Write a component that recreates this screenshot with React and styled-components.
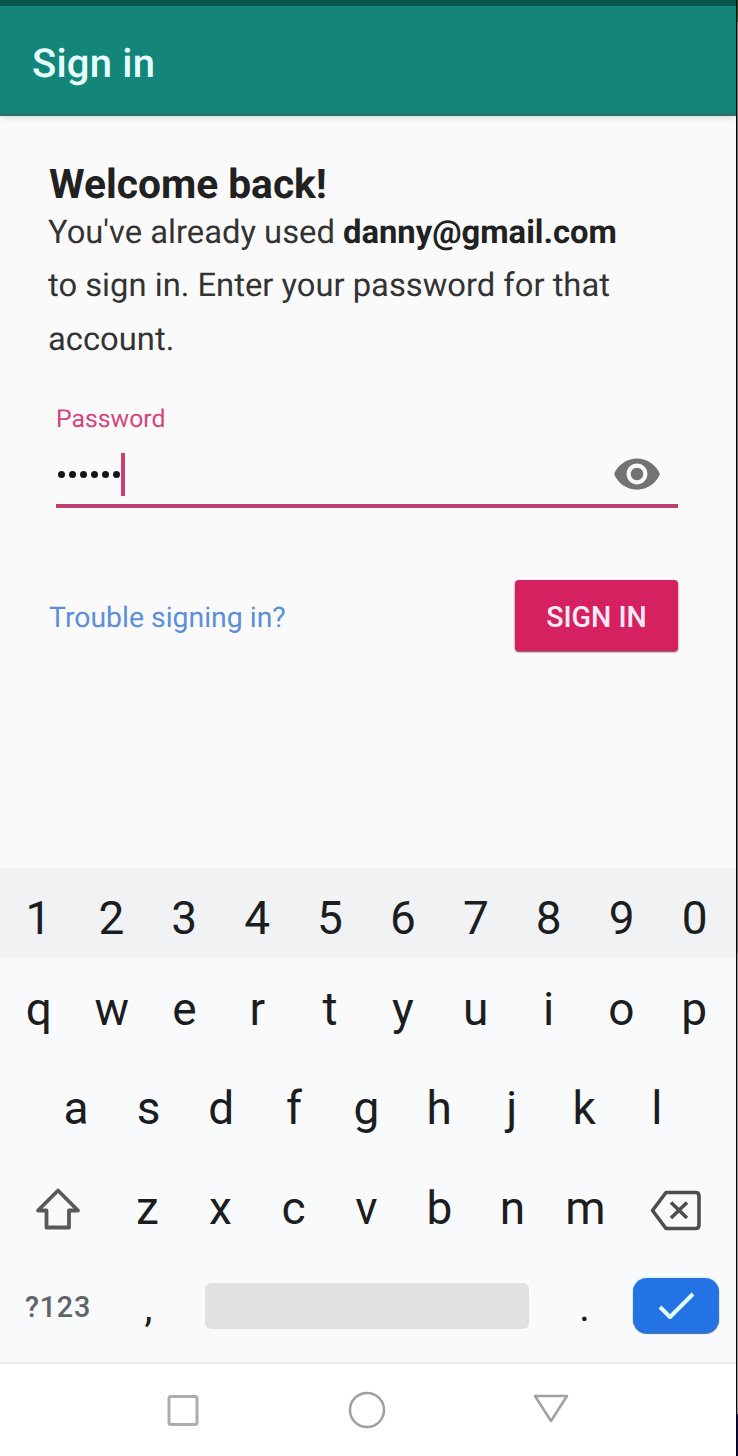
import React from "react";
import styled, { createGlobalStyle } from "styled-components";

const GlobalStyle = createGlobalStyle`
  * { box-sizing: border-box; }
  body { margin: 0; background: #fafafa; font-family: Roboto, "Liberation Sans", sans-serif; text-rendering: geometricPrecision; }
  button { font: inherit; border: 0; padding: 0; background: none; color: inherit; }
`;

const Frame = styled.div`
  width: 738px;
  height: 1456px;
  display: flex;
  overflow: hidden;
`;

const Screen = styled.div`
  width: 736px;
  display: flex;
  flex-direction: column;
  background: #fafafa;
`;

const Edge = styled.div`
  width: 2px;
  border-left: 1px solid #000;
  background: linear-gradient(#17591c 0 22px, #777 22px 954px, #999 954px 1414px, #12126b 1414px);
`;

const StatusBar = styled.div`
  height: 6px;
  background: #07574e;
`;

const AppBar = styled.header`
  height: 110px;
  padding: 0 32px;
  background: linear-gradient(#148579 0 105px, #2c6d66 110px);
  box-shadow: 0 1px 6px rgba(60, 90, 90, 0.22);
  z-index: 1;
`;

const AppTitle = styled.h1`
  margin: 0;
  font-size: 40px;
  line-height: 115px;
  font-weight: 500;
  letter-spacing: 0.2px;
  color: #e6fffc;
`;

const Content = styled.main`
  height: 752px;
  padding: 45px 58px 0 49px;
  color: #212121;
`;

const Heading = styled.h2`
  margin: 0;
  font-size: 40.7px;
  line-height: 46px;
  font-weight: 700;
`;

const Message = styled.p`
  margin: -1px -20px 0 -1px;
  font-size: 32.75px;
  line-height: 53.4px;
  color: #333;
  white-space: nowrap;
  b { color: #212121; }
`;

const Field = styled.div`
  margin: 38px 0 0 7px;
  height: 104px;
  border-bottom: 4px solid #bf3f72;
  color: #d4467d;
`;

const FieldLabel = styled.label`
  display: block;
  height: 30px;
  font-size: 24.8px;
  line-height: 32px;
`;

const FieldRow = styled.div`
  display: flex;
  align-items: center;
  height: 62px;
  padding: 0 16px 0 2px;
  margin-top: 9px;
`;

const Dots = styled.div`
  display: flex;
  gap: 4px;
`;

const Dot = styled.span`
  width: 7px;
  height: 7px;
  border-radius: 50%;
  background: #151515;
`;

const Caret = styled.span`
  width: 4px;
  height: 43px;
  margin-left: 1px;
  background: #d03d72;
`;

const EyeButton = styled.button`
  display: flex;
  margin-left: auto;
`;

const Actions = styled.div`
  margin-top: 72px;
  display: flex;
  align-items: center;
  justify-content: space-between;
`;

const TroubleLink = styled.a`
  font-size: 28.4px;
  line-height: 36px;
  color: #5b8fdc;
  padding-top: 4px;
`;

const SignInButton = styled.button`
  width: 163px;
  height: 71px;
  border-radius: 4px;
  background: #d52160;
  color: #ffeaf5;
  font-size: 28.6px;
  line-height: 74px;
  font-weight: 500;
  box-shadow: 0 1px 2px rgba(70, 0, 35, 0.8);
`;

const Keyboard = styled.section`
  height: 494px;
  background: #f9fafc;
  color: #1c1d1f;
`;

const KeyRow = styled.div`
  display: flex;
  justify-content: ${(p) => p.$justify || "center"};
  height: ${(p) => p.$height}px;
  padding: ${(p) => p.$padding || "0 5px 0 1px"};
  background: ${(p) => p.$background || "transparent"};
`;

const Key = styled.button`
  width: ${(p) => p.$width || 73}px;
  display: flex;
  align-items: center;
  justify-content: center;
  font-size: 46px;
  line-height: 54px;
`;

const SymbolsKey = styled(Key)`
  font-size: 28.7px;
  font-weight: 500;
  letter-spacing: 0.8px;
  padding: 2px 0 0 3px;
  color: #626366;
`;

const PunctuationKey = styled(Key)`
  font-size: 40px;
  padding-top: 4px;
`;

const SpaceBar = styled.button`
  width: 324px;
  height: 46px;
  margin: auto 19px auto 20px;
  border-radius: 6px;
  background: #e1e1e1;
`;

const EnterKey = styled.button`
  width: 86px;
  height: 55px;
  margin: 21px 0 0 12px;
  display: flex;
  align-items: center;
  justify-content: center;
  border-radius: 14px;
  background: #2373e4;
  box-shadow: 0 1px 1px #46658e, 0 -1px 2px #c9f2ff;
`;

const NavBar = styled.nav`
  height: 94px;
  border-top: 2px solid #ebebeb;
  background: #fff;
  display: flex;
  justify-content: center;
  padding-top: 26px;
`;

const NavButton = styled.button`
  width: 184px;
  height: 40px;
  display: flex;
  justify-content: center;
`;

const Icon = styled.svg`
  display: block;
  fill: none;
  stroke: ${(p) => p.$color};
  stroke-width: ${(p) => p.$stroke};
  stroke-linejoin: round;
`;

const letters = (text, width) =>
  text.split("").map((c) => <Key key={c} $width={width}>{c}</Key>);

export default function App() {
  return (
    <Frame>
      <GlobalStyle />
      <Screen>
        <StatusBar />
        <AppBar><AppTitle>Sign in</AppTitle></AppBar>
        <Content>
          <Heading>Welcome back!</Heading>
          <Message>
            You've already used <b>danny@gmail.com</b><br />
            to sign in. Enter your password for that<br />
            account.
          </Message>
          <Field>
            <FieldLabel>Password</FieldLabel>
            <FieldRow>
              <Dots>{[0, 1, 2, 3, 4, 5].map((i) => <Dot key={i} />)}</Dots>
              <Caret />
              <EyeButton aria-label="Show password">
                <svg width="50" height="50" viewBox="0 0 24 24" fill="#737373">
                  <path d="M12 4.5C7 4.5 2.73 7.61 1 12c1.73 4.39 6 7.5 11 7.5s9.27-3.11 11-7.5c-1.73-4.39-6-7.5-11-7.5zM12 17c-2.76 0-5-2.24-5-5s2.24-5 5-5 5 2.24 5 5-2.24 5-5 5zm0-8c-1.66 0-3 1.34-3 3s1.34 3 3 3 3-1.34 3-3-1.34-3-3-3z" />
                </svg>
              </EyeButton>
            </FieldRow>
          </Field>
          <Actions>
            <TroubleLink>Trouble signing in?</TroubleLink>
            <SignInButton>SIGN IN</SignInButton>
          </Actions>
        </Content>
        <Keyboard>
          <KeyRow $height={91} $padding="8px 5px 0 2px" $background="#f1f2f4">{letters("1234567890")}</KeyRow>
          <KeyRow $height={99} $padding="1px 5px 0 2px">{letters("qwertyuiop", 72.8)}</KeyRow>
          <KeyRow $height={99} $padding="0 4px 0 1px">{letters("asdfghjkl", 72.6)}</KeyRow>
          <KeyRow $height={100} $padding="2px 4px 0 1px">
            <Key $width={109} aria-label="Shift">
              <Icon width="48" height="46" viewBox="0 0 48 46" $color="#58595b" $stroke={3.8}>
                <path d="M25 5.5 L5 25.500 H13.500 V42.500 H36 V25.500 H45 Z" />
              </Icon>
            </Key>
            {letters("zxcvbnm")}
            <Key $width={109} aria-label="Backspace">
              <Icon width="54" height="46" viewBox="0 0 54 46" $color="#4d4e51" $stroke={3.6}>
                <path d="M16 7.500 H45.500 Q49 7.500 49 11 V40 Q49 43.500 45.500 43.500 H16 L2.500 25.500 Z" />
                <path d="M21 17.500 L37 33 M37 17.500 L21 33" />
              </Icon>
            </Key>
          </KeyRow>
          <KeyRow $height={98} $justify="flex-start">
            <SymbolsKey $width={111}>?123</SymbolsKey>
            <PunctuationKey>,</PunctuationKey>
            <SpaceBar aria-label="Space" />
            <PunctuationKey>.</PunctuationKey>
            <EnterKey aria-label="Done">
              <Icon width="40" height="30" viewBox="0 0 40 30" $color="#e4ffff" $stroke={4}>
                <path d="M4 16 L14 26 L37 3" />
              </Icon>
            </EnterKey>
          </KeyRow>
        </Keyboard>
        <NavBar>
          <NavButton aria-label="Recents">
            <Icon width="40" height="40" viewBox="0 0 40 40" $color="#adadad" $stroke={3}>
              <rect x="5" y="6.500" width="28" height="28" rx="2" />
            </Icon>
          </NavButton>
          <NavButton aria-label="Home">
            <Icon width="40" height="40" viewBox="0 0 40 40" $color="#a0a0a0" $stroke={2.5}>
              <circle cx="19" cy="20" r="17" />
            </Icon>
          </NavButton>
          <NavButton aria-label="Back">
            <Icon width="40" height="40" viewBox="0 0 40 40" $color="#a0a0a0" $stroke={2.5}>
              <path d="M3 6 H35 L19 31 Z" />
            </Icon>
          </NavButton>
        </NavBar>
      </Screen>
      <Edge />
    </Frame>
  );
}
